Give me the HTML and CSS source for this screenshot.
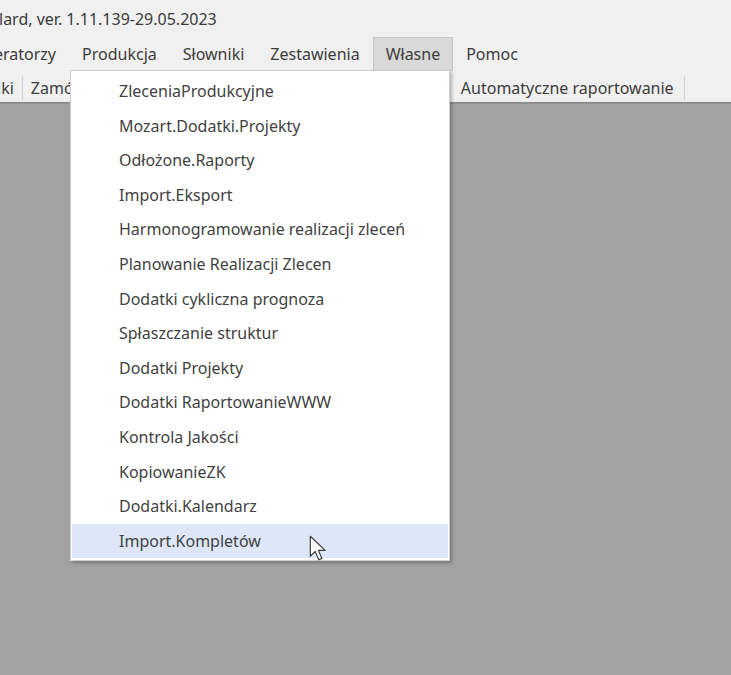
FILE: index.html
```html
<!DOCTYPE html>
<html lang="pl">
<head>
<meta charset="utf-8">
<link rel="stylesheet" href="styles.css">
</head>
<body>
<div class="app">
  <div class="title">lard, ver. 1.11.139-29.05.2023</div>
  <div class="menubar">
    <span class="mi mi-first">eratorzy</span>
    <span class="mi">Produkcja</span>
    <span class="mi">Słowniki</span>
    <span class="mi">Zestawienia</span>
    <span class="mi active">Własne</span>
    <span class="mi">Pomoc</span>
  </div>
  <div class="toolbar">
    <span class="tb tb-first">iki</span>
    <span class="sep"></span>
    <span class="tb tb-zam">Zamówienia</span>
    <span class="tb tb-auto">Automatyczne raportowanie</span>
    <span class="sep"></span>
  </div>
  <div class="workspace"></div>

  <div class="dropdown">
    <div class="item">ZleceniaProdukcyjne</div>
    <div class="item">Mozart.Dodatki.Projekty</div>
    <div class="item">Odłożone.Raporty</div>
    <div class="item">Import.Eksport</div>
    <div class="item">Harmonogramowanie realizacji zleceń</div>
    <div class="item">Planowanie Realizacji Zlecen</div>
    <div class="item">Dodatki cykliczna prognoza</div>
    <div class="item">Spłaszczanie struktur</div>
    <div class="item">Dodatki Projekty</div>
    <div class="item">Dodatki RaportowanieWWW</div>
    <div class="item">Kontrola Jakości</div>
    <div class="item">KopiowanieZK</div>
    <div class="item">Dodatki.Kalendarz</div>
    <div class="item hover">Import.Kompletów</div>
  </div>

  <svg class="cursor" width="18" height="27" viewBox="0 0 14 21">
    <path d="M1 1 L1 16.5 L4.8 12.8 L7.6 19.2 L10 18.2 L7.3 11.9 L12.6 11.9 Z" fill="#ffffff" stroke="#3a3a3a" stroke-width="0.9" stroke-linejoin="round"/>
  </svg>
</div>
</body>
</html>
```
FILE: styles.css
```css
* { box-sizing: border-box; }
html, body { margin: 0; padding: 0; }
body {
  width: 731px;
  height: 675px;
  overflow: hidden;
  background: #a2a2a2;
  font-family: "Noto Sans", "Open Sans", sans-serif;
  font-size: 16px;
  color: #3c3c3c;
}
.app {
  position: relative;
  width: 731px;
  height: 675px;
  display: flex;
  flex-direction: column;
}
.title {
  height: 37px;
  background: #f0f0f0;
  padding: 9px 0 0 0;
  margin-left: -1px;
  line-height: 20px;
  color: #3a3a3a;
}
.menubar {
  height: 34px;
  background: #f0f0f0;
  display: flex;
  align-items: stretch;
}
.mi {
  display: flex;
  align-items: center;
  padding: 0 12px 1px 12px;
  border: 1px solid transparent;
  white-space: nowrap;
}
.mi-first { padding-left: 0; margin-left: -7px; }
.mi.active {
  background: #d9d9d9;
  border-color: #c6c6c6;
}
.toolbar {
  height: 31px;
  background: #f0f0f0;
  display: flex;
  align-items: center;
  padding-top: 3px;
  border-bottom: 1px solid #e6e6e6;
}
.tb { padding: 0 8px; line-height: 20px; white-space: nowrap; }
.tb-first { padding-left: 0; margin-left: -3px; padding-right: 8px; }
.tb-zam { flex: 0 0 430px; overflow: hidden; }
.tb-auto { padding: 0 10px 0 8px; }
.sep {
  width: 1px;
  height: 24px;
  background: #d2d2d2;
}
.workspace {
  flex: 1;
  background: #a2a2a2;
  border-top: 2px solid #8f8f8f;
}
.dropdown {
  position: absolute;
  left: 70px;
  top: 70px;
  width: 380px;
  height: 491px;
  background: #ffffff;
  border: 1px solid #cfcfcf;
  box-shadow: 2px 2px 3px rgba(0,0,0,0.25);
  padding: 3px 1px;
  display: flex;
  flex-direction: column;
}
.item {
  height: 34.6px;
  line-height: 34.6px;
  padding-left: 47px;
  color: #424242;
  white-space: nowrap;
}
.item.hover {
  background: #dde7f8;
}
.cursor {
  position: absolute;
  left: 309px;
  top: 535px;
}
```
